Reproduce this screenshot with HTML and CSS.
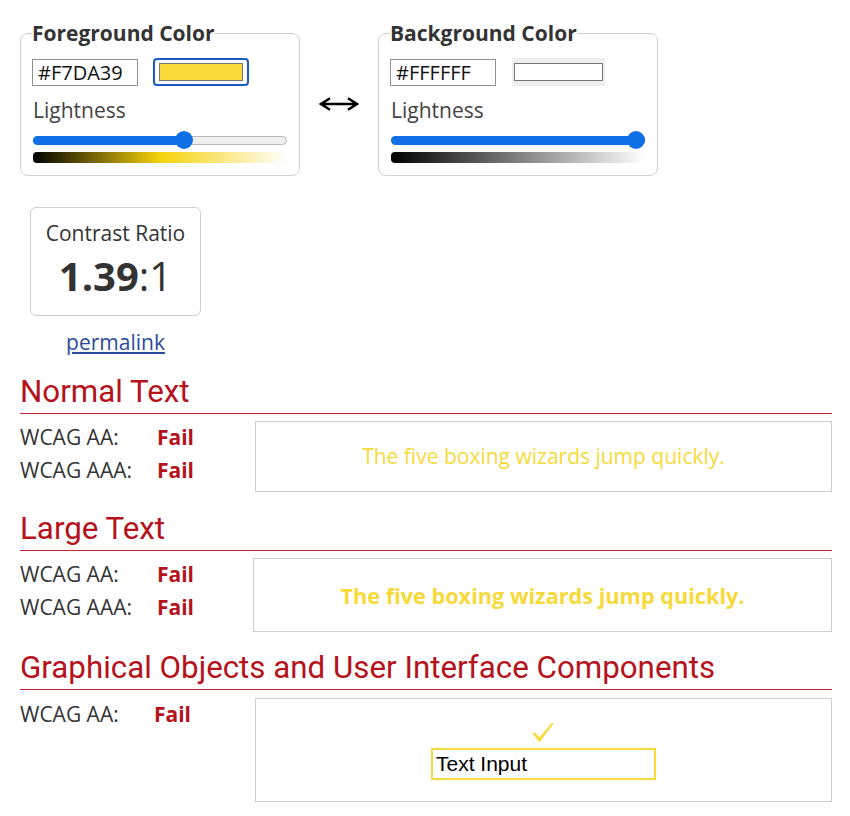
FILE: index.html
```html
<!DOCTYPE html>
<html lang="en">
<head>
<meta charset="utf-8">
<title>Contrast Checker</title>
<link rel="stylesheet" href="styles.css">
</head>
<body>
<div class="page">
  <div class="pickers">
    <fieldset class="picker">
      <legend>Foreground Color</legend>
      <div class="inputs">
        <input class="hex" type="text" value="#F7DA39">
        <span class="swatch swatch-focused"><span class="swatch-fill fg-fill"></span></span>
      </div>
      <div class="light-label">Lightness</div>
      <div class="slider">
        <div class="track"></div>
        <div class="fill" style="width:59.6%"></div>
        <div class="thumb" style="left:59.6%"></div>
      </div>
      <div class="gradient fg-gradient"></div>
    </fieldset>
    <div class="swap">
      <svg class="swap-icon" width="40" height="14" viewBox="0 0 40 14" aria-label="swap colors">
        <path d="M2 7 H38 M11 1.2 L2 7 L11 12.8 M29 1.2 L38 7 L29 12.8" fill="none" stroke="#000" stroke-width="2.4" stroke-linejoin="miter"/>
      </svg>
    </div>
    <fieldset class="picker picker-bg">
      <legend>Background Color</legend>
      <div class="inputs">
        <input class="hex" type="text" value="#FFFFFF">
        <span class="swatch swatch-plain"><span class="swatch-fill bg-fill"></span></span>
      </div>
      <div class="light-label">Lightness</div>
      <div class="slider">
        <div class="track"></div>
        <div class="fill" style="width:100%"></div>
        <div class="thumb thumb-end" style="left:100%"></div>
      </div>
      <div class="gradient bg-gradient"></div>
    </fieldset>
  </div>

  <div class="ratio-wrap">
    <div class="ratio">
      <div class="ratio-label">Contrast Ratio</div>
      <div class="ratio-value"><b>1.39</b>:1</div>
    </div>
    <a class="permalink" href="#">permalink</a>
  </div>

  <section class="result result-normal">
    <h2>Normal Text</h2>
    <div class="result-body">
      <div class="levels">
        <div class="level"><span class="level-name">WCAG AA:</span><span class="fail">Fail</span></div>
        <div class="level"><span class="level-name">WCAG AAA:</span><span class="fail">Fail</span></div>
      </div>
      <div class="demo demo-normal">The five boxing wizards jump quickly.</div>
    </div>
  </section>

  <section class="result result-large">
    <h2>Large Text</h2>
    <div class="result-body">
      <div class="levels">
        <div class="level"><span class="level-name">WCAG AA:</span><span class="fail">Fail</span></div>
        <div class="level"><span class="level-name">WCAG AAA:</span><span class="fail">Fail</span></div>
      </div>
      <div class="demo demo-large">The five boxing wizards jump quickly.</div>
    </div>
  </section>

  <section class="result result-ui">
    <h2>Graphical Objects and User Interface Components</h2>
    <div class="result-body">
      <div class="levels">
        <div class="level"><span class="level-name">WCAG AA:</span><span class="fail">Fail</span></div>
      </div>
      <div class="demo demo-ui">
        <svg class="check" width="22" height="20" viewBox="0 0 22 20" aria-label="check">
          <path d="M0.5 11.2 L2.6 10.2 L7.4 15.6 L20.2 0.6 L21.6 1.6 L8.2 19.6 L6.6 19.6 Z" fill="#F7DA39"/>
        </svg>
        <div class="text-input">Text Input</div>
      </div>
    </div>
  </section>
</div>
</body>
</html>
```

FILE: styles.css
```css
* { box-sizing: border-box; }

html, body {
  margin: 0;
  padding: 0;
  background: #fff;
}

body {
  font-family: "Open Sans", "DejaVu Sans", sans-serif;
  color: #333;
  font-size: 21px;
  line-height: 29px;
}

.page {
  padding: 19px 18px 0 20px;
}

/* ---------- colour pickers ---------- */
.pickers {
  display: flex;
  align-items: flex-start;
}

.picker {
  width: 280px;
  margin: 0;
  padding: 10px 11px 12px 11px;
  border: 1px solid #cfcfcf;
  border-radius: 8px;
}

.picker legend {
  padding: 0;
  font-weight: 700;
  font-size: 21px;
  line-height: 29px;
  color: #333;
}

.inputs {
  display: flex;
  align-items: center;
  gap: 15px;
  height: 28px;
}

.hex {
  width: 106px;
  height: 27px;
  margin: 0;
  padding: 0 5px;
  border: 1px solid #8f8f8f;
  font-family: "Open Sans", sans-serif;
  font-size: 20px;
  color: #111;
  background: #fff;
  outline: none;
}

.swatch {
  display: flex;
  width: 96px;
  height: 28px;
}

.swatch-focused {
  border: 2px solid #1b5cc4;
  border-radius: 4px;
  padding: 3px 4px;
}

.swatch-plain {
  width: 93px;
  margin-left: 1px;
  background: #efefef;
  padding: 5px 2px 5px 2px;
}

.swatch-fill {
  flex: 1;
  border: 1px solid #767676;
}

.fg-fill { background: #F7DA39; }
.bg-fill { background: #FFFFFF; }

.light-label {
  margin-top: 10px;
  line-height: 29px;
  font-size: 21px;
  color: #444;
  padding-left: 1px;
}

.slider {
  position: relative;
  height: 18px;
  margin: 6px 1px 0 1px;
}

.track {
  position: absolute;
  left: 0;
  right: 0;
  top: 5px;
  height: 9px;
  border: 1px solid #b8b8b8;
  border-radius: 5px;
  background: #efefef;
}

.fill {
  position: absolute;
  left: 0;
  top: 5px;
  height: 9px;
  border-radius: 5px;
  background: #1170e6;
}

.thumb {
  position: absolute;
  top: 0;
  width: 18px;
  height: 18px;
  margin-left: -9px;
  border-radius: 50%;
  background: #1170e6;
}

.thumb-end { margin-left: -18px; }

.gradient {
  height: 11px;
  margin: 3px 1px 0 1px;
  border-radius: 4px;
}

.fg-gradient {
  background: linear-gradient(to right, #000, hsl(51, 92%, 50%), #fff);
}

.bg-gradient {
  background: linear-gradient(to right, #000, #fff);
}

.swap {
  width: 78px;
  display: flex;
  justify-content: center;
  margin-top: 78px;
}

.swap-icon { display: block; }

/* ---------- ratio ---------- */
.ratio-wrap {
  width: 171px;
  margin: 31px 0 0 10px;
  text-align: center;
}

.ratio {
  height: 109px;
  border: 1px solid #cfcfcf;
  border-radius: 6px;
  padding-top: 11px;
}

.ratio-label {
  font-size: 21px;
  line-height: 29px;
  color: #333;
}

.ratio-value {
  margin-top: 2px;
  font-size: 40px;
  line-height: 52px;
  color: #333;
}

.ratio-value b { font-weight: 700; }

.permalink {
  display: block;
  margin-top: 12px;
  font-size: 21px;
  line-height: 29px;
  color: #2b4a9b;
}

/* ---------- results ---------- */
.result h2 {
  margin: 0;
  font-family: Roboto, "Liberation Sans", sans-serif;
  font-weight: 400;
  font-size: 31.3px;
  line-height: 36px;
  color: #b5121b;
  padding-bottom: 3px;
  border-bottom: 1px solid #c1252f;
}

.result-normal { margin-top: 17px; }
.result-large { margin-top: 19px; }
.result-ui { margin-top: 18px; }

.result-body {
  display: flex;
  margin-top: 7px;
}

.result-ui .result-body { margin-top: 8px; }

.levels {
  width: 235px;
  flex: none;
}

.result-large .levels { width: 233px; }

.level {
  display: flex;
  line-height: 33px;
}

.level-name {
  width: 137px;
  flex: none;
}

.result-ui .level-name { width: 134px; }

.fail {
  font-weight: 700;
  color: #b5121b;
}

.demo {
  flex: 1;
  border: 1px solid #cfcfcf;
  display: flex;
  align-items: center;
  justify-content: center;
  color: #F7DA39;
}

.demo-normal {
  height: 71px;
  font-size: 21px;
}

.demo-large {
  height: 74px;
  font-size: 21.7px;
  font-weight: 700;
}

.demo-ui {
  height: 104px;
  flex-direction: column;
  justify-content: flex-start;
  padding-top: 23px;
}

.check {
  display: block;
  margin-left: -2px;
}

.text-input {
  width: 225px;
  height: 32px;
  margin-top: 6px;
  border: 2px solid #F7DA39;
  padding: 0 3px;
  font-family: "Liberation Sans", Arial, sans-serif;
  font-size: 21px;
  line-height: 28px;
  color: #000;
}
```
